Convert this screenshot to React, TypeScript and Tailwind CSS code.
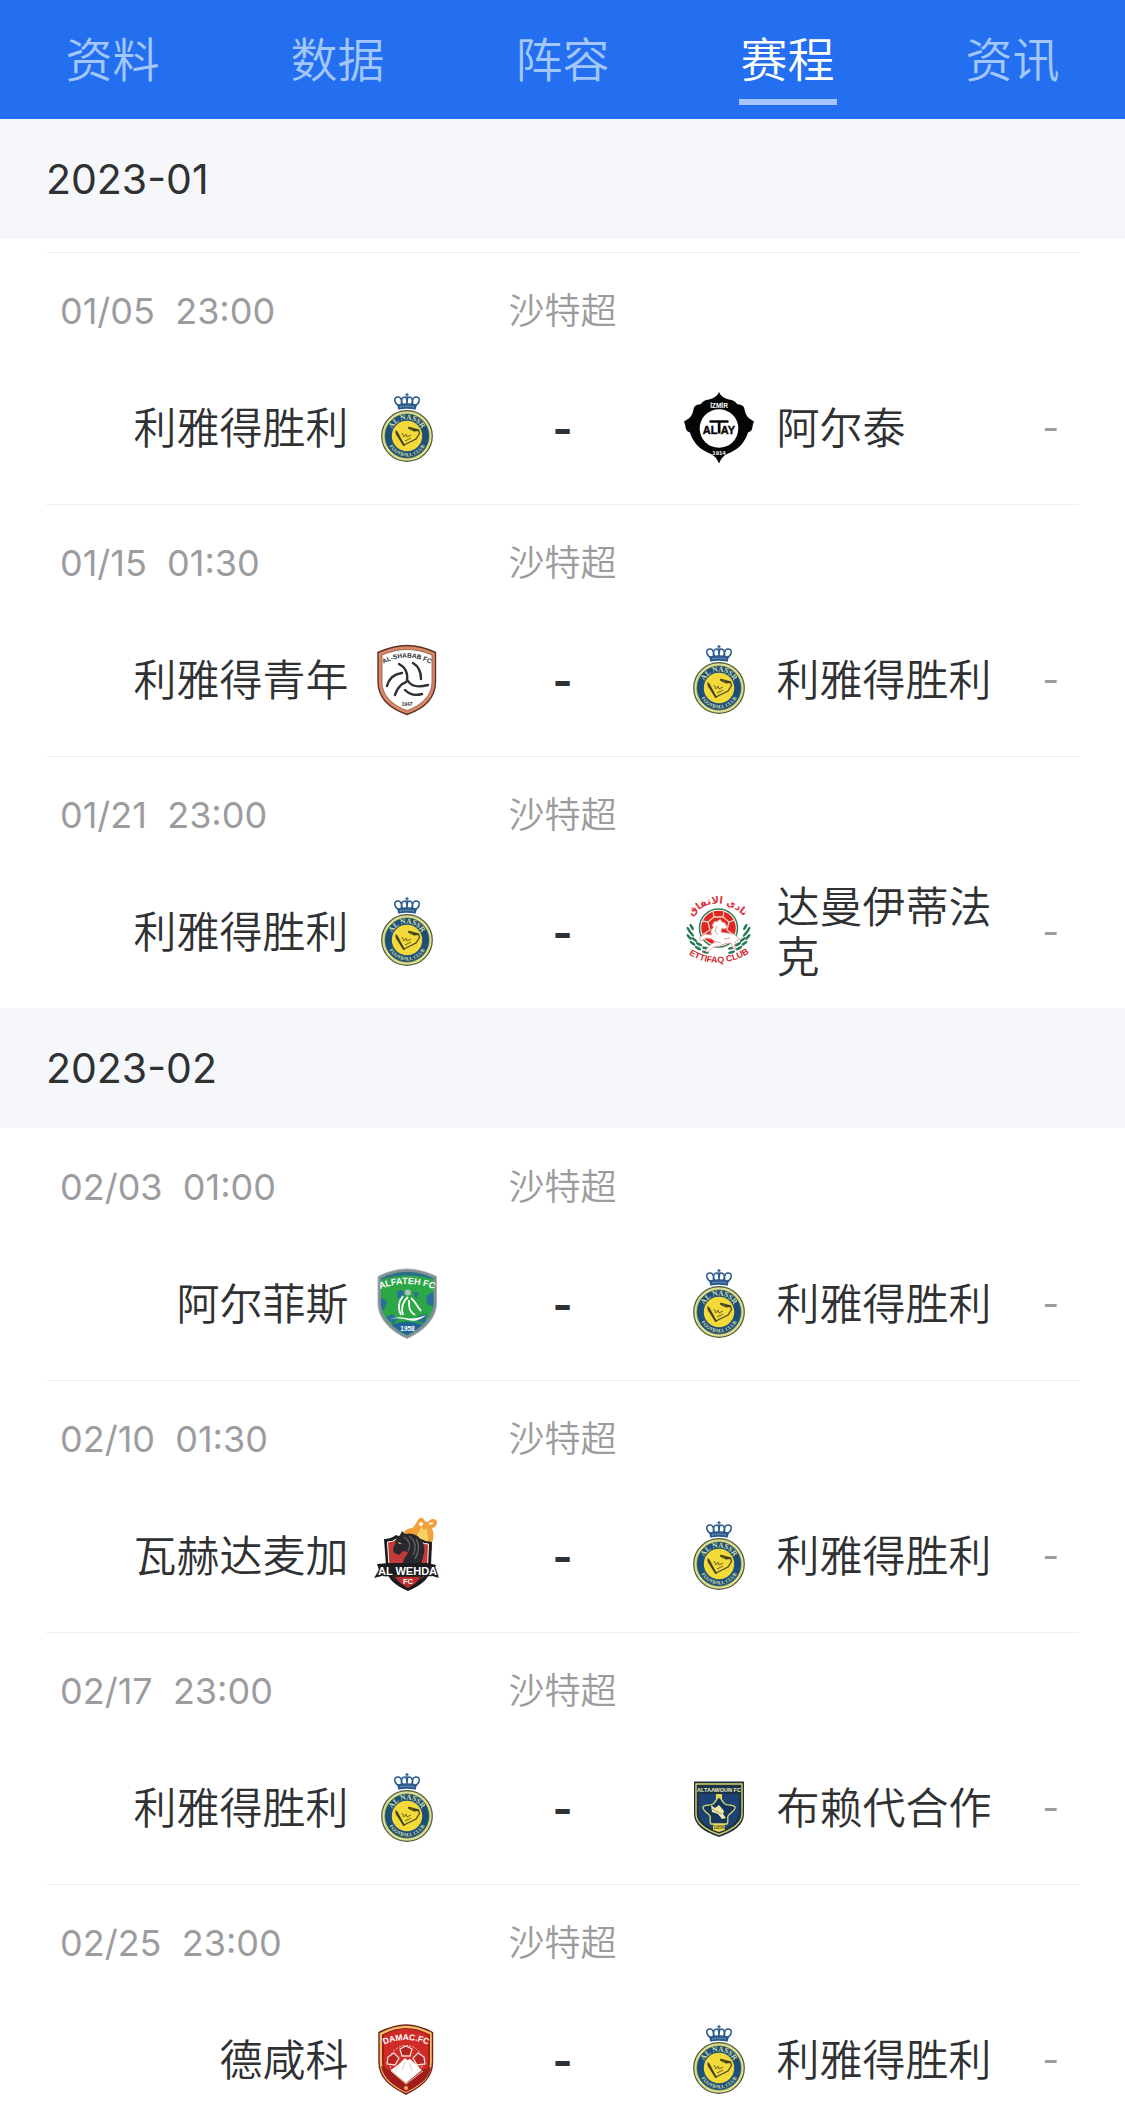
import { useId, useState } from "react";
import type { ReactNode } from "react";

type Club =
  | "nassr"
  | "altay"
  | "shabab"
  | "ettifaq"
  | "fateh"
  | "wehda"
  | "taawoun"
  | "damac";

type Match = {
  date: string;
  time: string;
  league: string;
  home: string;
  homeClub: Club;
  away: string;
  awayClub: Club;
};

type Month = { label: string; gap: boolean; matches: Match[] };

const TABS = ["资料", "数据", "阵容", "赛程", "资讯"];

const MONTHS: Month[] = [
  {
    label: "2023-01",
    gap: true,
    matches: [
      { date: "01/05", time: "23:00", league: "沙特超", home: "利雅得胜利", homeClub: "nassr", away: "阿尔泰", awayClub: "altay" },
      { date: "01/15", time: "01:30", league: "沙特超", home: "利雅得青年", homeClub: "shabab", away: "利雅得胜利", awayClub: "nassr" },
      { date: "01/21", time: "23:00", league: "沙特超", home: "利雅得胜利", homeClub: "nassr", away: "达曼伊蒂法克", awayClub: "ettifaq" },
    ],
  },
  {
    label: "2023-02",
    gap: false,
    matches: [
      { date: "02/03", time: "01:00", league: "沙特超", home: "阿尔菲斯", homeClub: "fateh", away: "利雅得胜利", awayClub: "nassr" },
      { date: "02/10", time: "01:30", league: "沙特超", home: "瓦赫达麦加", homeClub: "wehda", away: "利雅得胜利", awayClub: "nassr" },
      { date: "02/17", time: "23:00", league: "沙特超", home: "利雅得胜利", homeClub: "nassr", away: "布赖代合作", awayClub: "taawoun" },
      { date: "02/25", time: "23:00", league: "沙特超", home: "德咸科", homeClub: "damac", away: "利雅得胜利", awayClub: "nassr" },
    ],
  },
];

function Svg({ children }: { children: ReactNode }) {
  return (
    <svg viewBox="0 0 72 72" className="size-[72px] shrink-0 overflow-visible" aria-hidden="true">
      {children}
    </svg>
  );
}

function Nassr() {
  const id = useId();
  return (
    <Svg>
      <defs>
        <path id={id + "t"} d="M19.6 44a16.4 16.4 0 0 1 32.8 0" />
        <path id={id + "b"} d="M15.6 44a20.4 20.4 0 0 0 40.8 0" />
      </defs>
      <g fill="none" stroke="#2b5a8c" strokeWidth="1.5">
        <path d="M28 14c-5-3-6-9-1-9 4 0 4 5 3 9M44 14c5-3 6-9 1-9-4 0-4 5-3 9" />
        <path d="M32 14c-3-5-1-9 2-9 2 0 2 4 2 9 0-5 0-9 2-9 3 0 5 4 2 9" />
      </g>
      <path d="M36 1v5M34.4 2.6h3.2" stroke="#2b5a8c" strokeWidth="1.2" />
      <path d="M26 12.5q10-2.4 20 0l-1.4 5.3q-8.600-2-17.200 0z" fill="#2b5a8c" />
      <path d="M29 15q7-1.500 14 0" fill="none" stroke="#b9c9d9" strokeWidth=".8" strokeDasharray="1.500 1" />
      <circle cx="36" cy="44" r="25.300" fill="#d9de92" stroke="#4e5637" strokeWidth="1.200" />
      <circle cx="36" cy="44" r="22" fill="#1d4f7d" stroke="#46603f" strokeWidth=".8" />
      <circle cx="36" cy="44" r="15.200" fill="#f4da38" />
      <g fontFamily="Liberation Serif, serif" fontWeight="700" fill="#d9dfa0" textAnchor="middle">
        <text fontSize="7.500">
          <textPath href={"#" + id + "t"} startOffset="50%">AL NASSR</textPath>
        </text>
        <text fontSize="5">
          <textPath href={"#" + id + "b"} startOffset="50%">FOOTBALL CLUB</textPath>
        </text>
      </g>
      <path
        d="M25.500 39l7.500 14 12-6 3.500-5.500-1-3.500-9-2.500"
        fill="none"
        stroke="#4d4b1d"
        strokeWidth="1.300"
      />
      <path d="M24.500 37.500l9.500 16.500-2-.5-7.500-12zM37 34.500l4 2.700 6-.2 1 2-5 .6-6-3z" fill="#3c411f" />
      <path d="M31 41l2 4 2-3 1 3 4-2M34 49l6-3" fill="none" stroke="#6f6424" strokeWidth="1" />
    </Svg>
  );
}

function Altay() {
  return (
    <Svg>
      <path
        d="M36 0C38 4.500 41.500 6.500 46 7.500c4 .8 6.500 1.500 8 4.500 3 .5 6 1 7 3.500 1 3 1 6 3 8.500 2 3 5 4 7 5.500-1 2.500-1.500 4.500-1.800 7-.5 2-1.700 3-4.200 4-1 4-3.500 8-6 11.500-2.500 3-5 5-8 6.500-4 2.500-8 3.500-10.500 6-2 2-3.500 4.500-4.500 7-1-2.500-2.500-5-4.500-7C29 62 25 61 21 58.500c-3-1.500-5.500-3.500-8-6.500-2.500-3.500-5-7.500-6-11.500-2.500-1-3.700-2-4.200-4C2.500 34 2 32 1 29.500c2-1.500 5-2.500 7-5.500 2-2.500 2-5.500 3-8.500 1-2.500 4-3 7-3.500 1.500-3 4-3.700 8-4.500C30.500 6.500 34 4.500 36 0z"
        fill="#050505"
      />
      <circle cx="36" cy="36.500" r="19.300" fill="#fff" />
      <g fontFamily="Liberation Sans, sans-serif" fontWeight="700">
        <text x="36" y="16" fontSize="6.500" fill="#fff" textAnchor="middle">İZMİR</text>
        <text x="36" y="62.500" fontSize="6" fill="#fff" textAnchor="middle">1914</text>
        <g fontSize="11" fill="#050505" stroke="#050505" strokeWidth=".4">
          <text x="34.500" y="41.500" textAnchor="end">AL</text>
          <text x="37.800" y="41.500">AY</text>
        </g>
      </g>
      <path d="M26.500 28.300h19v2.500h-8v10.700h-2.700V30.800h-8.300z" fill="#050505" />
    </Svg>
  );
}

function Shabab() {
  const id = useId();
  return (
    <Svg>
      <defs>
        <path id={id} d="M14 19q22-11 44 0" />
      </defs>
      <path
        d="M36 1.500C44 1.500 55 4 64.500 8.500v29C64.500 55 52 65 36 70.500 20 65 7 55 7 37.500v-29C17 4 28 1.500 36 1.500z"
        fill="#d98766"
        stroke="#5a332a"
        strokeWidth="1.400"
      />
      <path
        d="M36 5.500C44 5.500 53 7.500 61 11v26.500C61 52 50 61.500 36 66.500 22 61.500 11 52 11 37.500V11C19 7.500 28 5.500 36 5.500z"
        fill="#fff"
        stroke="#8c5645"
        strokeWidth=".8"
      />
      <text fontFamily="Liberation Sans, sans-serif" fontWeight="700" fontSize="6.500" fill="#2b2b2b" textAnchor="middle">
        <textPath href={"#" + id} startOffset="50%">AL-SHABAB FC</textPath>
      </text>
      <g fill="none" stroke="#2e2e35" strokeWidth="2.400" strokeLinecap="round">
        <path d="M28 20c6 3 9 9 8 17-1 2-4 2-6 4-3 3-5 6-6 10" />
        <path d="M37 37c3 5 9 7 20 4" />
        <path d="M42 19c5 3 8 8 8 16" />
        <path d="M16 42c2-8 7-12 15-13" />
        <path d="M34 46c4 4 10 6 17 4" />
      </g>
      <text x="36" y="62" fontFamily="Liberation Sans, sans-serif" fontWeight="700" fontSize="5" fill="#333" textAnchor="middle">
        1947
      </text>
    </Svg>
  );
}

const LEAVES = [
  [7, 32, 60],
  [7, 39, 50],
  [10, 45, 38],
  [15, 50, 28],
  [22, 54, 15],
];

function Ettifaq() {
  const id = useId();
  return (
    <Svg>
      <defs>
        <path id={id + "t"} d="M6 23Q34-8 64 23" />
        <path id={id + "b"} d="M4 57.500Q35 77 68 56" />
      </defs>
      <text fontFamily="DejaVu Sans, sans-serif" fontWeight="700" fontSize="10" fill="#d8343c" textAnchor="middle">
        <textPath href={"#" + id + "t"} startOffset="50%">نادي الاتفاق</textPath>
      </text>
      <circle cx="35.500" cy="32" r="19" fill="#fff" stroke="#2b7c52" strokeWidth="1.500" />
      <circle cx="35.500" cy="32" r="17.300" fill="#e0261f" />
      <path
        d="M30 15l1 6-6 5-6-1M31 21h9l1-6M40 21l6 5 6-2M46 26l-2 8 7 5M25 26l2 8-8 5"
        fill="none"
        stroke="#f6d3c8"
        strokeWidth="1.300"
      />
      {LEAVES.map(([x, y, r]) => (
        <g key={y} fill="#247a55">
          <g transform={`translate(${x} ${y}) rotate(${r})`}>
            <ellipse cx="0" cy="-2" rx="3.600" ry="1.300" />
            <ellipse cx="1" cy="2" rx="3.600" ry="1.300" />
          </g>
          <g transform={`translate(${71 - x} ${y}) rotate(${-r})`}>
            <ellipse cx="0" cy="-2" rx="3.600" ry="1.300" />
            <ellipse cx="-1" cy="2" rx="3.600" ry="1.300" />
          </g>
        </g>
      ))}
      <path
        d="M29 30l2-4 4-1 2-2 2 3 3 1 2 4-2 2-3-1-1 4c5 2 12 0 15 4l4 3-4 2-2 4 2 5-3-2-2-5c-4 0-8 1-11 3l-7 1-5 5-3-1 5-6 5-3-3-3-6-1-5 3-2-3 6-4 7 1c-2-3-1-6 2-8z"
        fill="#fff"
        stroke="#e4a49c"
        strokeWidth=".9"
      />
      <path d="M34 30l-2 5 3 4M41 43l6-1M30 45l8 2" fill="none" stroke="#d98a84" strokeWidth=".8" />
      <text fontFamily="Liberation Sans, sans-serif" fontWeight="700" fontSize="8.800" fill="#d2232c" textAnchor="middle">
        <textPath href={"#" + id + "b"} startOffset="50%">ETTIFAQ CLUB</textPath>
      </text>
    </Svg>
  );
}

function Fateh() {
  const id = useId();
  return (
    <Svg>
      <defs>
        <path id={id} d="M9 21Q36 11 63 21" />
        <clipPath id={id + "c"}>
          <path d="M36 4C44 4 53 6 62.500 10.500v24C62.500 48 51 60 36 67 21 60 10 48 10 34.500v-24C19 6 28 4 36 4z" />
        </clipPath>
      </defs>
      <path
        d="M36 1C45 1 55 3.500 65.500 8.500V35C65.500 50 53 63 36 70.500 19 63 7 50 7 35V8.500C17 3.500 27 1 36 1z"
        fill="#7f8d96"
        stroke="#a9b1b5"
        strokeWidth="1"
      />
      <g clipPath={`url(#${id}c)`}>
        <path d="M8 0h57v70H8z" fill="#2ba746" />
        <path d="M8 0h57v12q-28-9-57 0z" fill="#2c6d8c" />
        <path d="M10 29l6 5-3 8-6 2zM62 24l-7 4 1 8 8 3zM26 23l6-1 1 6-6 3zM42 24l6 1-3 6zM15 49l6-3 6 5-5 5zM56 45l-8 3-2 5 8 3z" fill="#2a6e9b" />
        <path d="M20 57q16-7 32 0L36 70z" fill="#1f6397" />
      </g>
      <text fontFamily="Liberation Sans, sans-serif" fontWeight="700" fontSize="9" fill="#fff" textAnchor="middle">
        <textPath href={"#" + id} startOffset="50%">ALFATEH FC</textPath>
      </text>
      <circle cx="37" cy="24.500" r="3" fill="#a8c5bd" />
      <path d="M32 28c-5 6-5 13-2 19M37 29c-6 5-7 11-5 18M40 30c5 4 6 9 10 13M38 32c0 8 0 11 6 15" fill="none" stroke="#fff" strokeWidth="1.800" />
      <path d="M19 51q8-3 16-1t20-3q-9 8-18 5t-18-1z" fill="#fff" />
      <text x="36.500" y="63" fontFamily="Liberation Sans, sans-serif" fontWeight="700" fontSize="6.500" fill="#fff" textAnchor="middle">
        1958
      </text>
    </Svg>
  );
}

function Wehda() {
  return (
    <Svg>
      <path
        d="M30 16c2-4 6-8 11-8 3-2 4-5 6-8 2-3 5-3 6 0 2 2 4 3 6 0 2-2 7-1 7 2 0 4-3 6-5 6 2 5 2 10 0 15 1 6-2 12-6 14l-8 8-17-8z"
        fill="#f1a13c"
      />
      <path d="M46 14c3-2 3-6 5-8 0 4 3 5 4 2 3 7 3 17-1 25l-8-10z" fill="#fbd063" />
      <circle cx="50" cy="4" r="2" fill="#fff" />
      <path d="M58 4l4-1" stroke="#fff" strokeWidth="1.600" />
      <path d="M13 19q7 0 12-4l10 4h15q5 3 11 3l-1 24c0 12-9 19-23 25-14-6-22-13-22-25z" fill="#1c1c1f" />
      <path d="M16.500 22q5 0 9-3l9 3h15q4 2 8 2l-1 22c0 9-8 16-19.500 21C26 62 18 55 18 46z" fill="#c33a36" stroke="#fff" strokeWidth="1" />
      <path
        d="M24 24l1-5 4-4 2-4 3 3c8-2 15 2 18 9 3 8 0 13-2 22H32c-1-6 4-9 5-13l-5-1-4 4-5-2-1-4z"
        fill="#29292d"
      />
      <path d="M38 16c6 4 8 11 4 19M33 17c6 4 7 9 4 14M45 19c4 6 3 13-1 20" fill="none" stroke="#66676b" strokeWidth="1.300" />
      <path d="M27 22l4 1.500-3 .5z" fill="#e2c34a" />
      <path d="M6 44l12-1 38 0 9 2-2 4 5 9-10-3H14L3 58l5-8z" fill="#1c1c1f" />
      <path d="M22 56h30l-7 8-8 5-8-5z" fill="#b92e2e" stroke="#1c1c1f" strokeWidth="1.500" />
      <g fontFamily="Liberation Sans, sans-serif" fontWeight="700" textAnchor="middle">
        <text x="36.500" y="54.500" fontSize="11" fill="#fff" stroke="#1c1c1f" strokeWidth="2.500" paintOrder="stroke">
          AL WEHDA
        </text>
        <text x="37" y="64" fontSize="7.500" fill="#fff">FC</text>
      </g>
    </Svg>
  );
}

function Taawoun() {
  return (
    <Svg>
      <path d="M11 9.500h50V42c0 11-10 18-25 23C21 60 11 53 11 42z" fill="#1d3344" />
      <path d="M13 12h46v30c0 9-9 15.500-23 20.500C22 57.500 13 51 13 42z" fill="none" stroke="#d8d264" strokeWidth="1.400" />
      <path d="M16 22h40v20c0 7-8 13-20 17-12-4-20-10-20-17z" fill="#1d4275" />
      <path d="M33 22h6v5h-6zM30 50h12v8l-6 2-6-2z" fill="#e6d64d" />
      <path
        d="M36 25c2 0 3 5 6 7s8 0 10 3c1 3-5 6-7 9-1 3 1 6-1 8H28c-2-2 0-5-1-8-2-3-8-6-7-9 2-3 7-1 10-3s4-7 6-7z"
        fill="#16365c"
        stroke="#e0db69"
        strokeWidth="1.300"
      />
      <path d="M28 33l4 3 4-3 5 6-1 3 3 4-4 1-4-5-6-2z" fill="#eee8ae" />
      <path d="M29 37l10 5" stroke="#9b924b" strokeWidth=".8" />
      <g fontFamily="Liberation Sans, sans-serif" fontWeight="700" textAnchor="middle">
        <text x="36" y="19.500" fontSize="5.500" fill="#ecefc4">ALTAAWOUN FC</text>
        <text x="36" y="56.500" fontSize="5.500" fill="#5c5a22">1956</text>
      </g>
    </Svg>
  );
}

function Damac() {
  const id = useId();
  return (
    <Svg>
      <defs>
        <path id={id} d="M10 22Q35 10 60 22" />
        <clipPath id={id + "c"}>
          <circle cx="35" cy="39" r="20" />
        </clipPath>
      </defs>
      <path
        d="M35 1C44 1 53 4 61.500 8.500V38C61.500 54 50 63 35 70 20 63 8 54 8 38V8.500C17 4 26 1 35 1z"
        fill="#f0bf64"
        stroke="#742019"
        strokeWidth="1.400"
      />
      <path d="M35 4C43 4 51 6.500 59 10.500V38c0 13-10 21-24 27.500C21 59 11 51 11 38V10.500C19 6.500 27 4 35 4z" fill="#9e1d1d" />
      <path d="M35 5C43 5 50 7.500 57 11v27c0 7-3 11-7 15-5-7-25-7-30 0-4-4-7-8-7-15V11C20 7.500 27 5 35 5z" fill="#cf2b27" />
      <g clipPath={`url(#${id}c)`}>
        <circle cx="35" cy="38" r="16.500" fill="none" stroke="#f7cfc6" strokeWidth="1" strokeDasharray="2 1.500" />
        <path d="M29 25l6-3 6 3-2 7h-8zM17 33l6-4 5 5-4 7-8-1zM53 33l-6-4-5 5 4 7 8-1z" fill="#b32320" stroke="#f9ded8" strokeWidth="1.300" />
      </g>
      <path d="M20 46l8-6 6-6 2 2 3-1 8 7 5 6-10 9-6 4-7-4z" fill="#fff" />
      <path d="M10 42l10 5 15 12 16-13 9-3c-2 12-12 19-25 25C22 62 12 54 10 42z" fill="#a11d1c" />
      <path d="M20 47l15 13 17-13" fill="none" stroke="#f0c9a0" strokeWidth="1" />
      <path d="M28 42l-4 5M34 38l-3 8M39 40l2 7" stroke="#e9c8c3" strokeWidth="1" />
      <text fontFamily="Liberation Sans, sans-serif" fontWeight="700" fontSize="8.500" fill="#fff" textAnchor="middle">
        <textPath href={"#" + id} startOffset="50%">DAMAC.FC</textPath>
      </text>
      <circle cx="35" cy="64" r="2" fill="#e9b565" />
    </Svg>
  );
}

const CRESTS: Record<Club, () => ReactNode> = {
  nassr: Nassr,
  altay: Altay,
  shabab: Shabab,
  ettifaq: Ettifaq,
  fateh: Fateh,
  wehda: Wehda,
  taawoun: Taawoun,
  damac: Damac,
};

function MatchRow({ match, first, gap }: { match: Match; first: boolean; gap: boolean }) {
  const Home = CRESTS[match.homeClub];
  const Away = CRESTS[match.awayClub];
  return (
    <li className={`mx-[46px] border-t pt-[34px] pb-[26px] ${first && !gap ? "border-transparent" : "border-[#eceef0]"}`}>
      <div className="grid grid-cols-[1fr_240px_1fr] items-center text-[36px] leading-[48px] text-[#9c9c9f]">
        <time className="pl-[14px] whitespace-pre">{match.date + "  " + match.time}</time>
        <span className="text-center font-[350]">{match.league}</span>
      </div>
      <div className="mt-[43px] grid min-h-[100px] grid-cols-[1fr_240px_1fr] items-center text-[43px] leading-[50px] text-[#303133]">
        <div className="flex items-center justify-end gap-[22px]">
          <span className="text-right font-[350]">{match.home}</span>
          <Home />
        </div>
        <span className="text-center font-bold">-</span>
        <div className="flex items-center gap-[22px]">
          <Away />
          <span className="w-[220px] font-[350]">{match.away}</span>
          <span className="flex-1 pr-[20px] text-right text-[36px] text-[#9c9c9f]">-</span>
        </div>
      </div>
    </li>
  );
}

export default function App() {
  const [active, setActive] = useState("赛程");
  return (
    <div className="flex h-screen flex-col overflow-hidden bg-white font-['Inter','Noto_Sans_CJK_SC',sans-serif] font-normal">
      <nav className="grid h-[119px] shrink-0 grid-cols-5 bg-[#246fef]">
        {TABS.map((tab) => (
          <button
            key={tab}
            type="button"
            onClick={() => setActive(tab)}
            aria-current={tab === active ? "page" : undefined}
            className={`flex flex-col items-center pt-[30px] text-[47px] leading-[60px] font-[350] ${
              tab === active ? "text-white" : "text-[#a3c6fb]"
            }`}
          >
            {tab}
            <span className={`mt-[9px] h-[6px] w-[98px] ${tab === active ? "bg-[#a6c4fb]" : "bg-transparent"}`} />
          </button>
        ))}
      </nav>
      <main className="min-h-0 flex-1 overflow-y-auto [scrollbar-width:none]">
        {MONTHS.map((month) => (
          <section key={month.label}>
            <h2 className="flex h-[120px] items-center bg-[#f6f7fa] px-[46px] text-[41px] leading-[50px] text-[#303133]">
              {month.label}
            </h2>
            <ul className={month.gap ? "pt-[13px]" : ""}>
              {month.matches.map((match, i) => (
                <MatchRow key={match.date} match={match} first={i === 0} gap={month.gap} />
              ))}
            </ul>
          </section>
        ))}
      </main>
    </div>
  );
}
